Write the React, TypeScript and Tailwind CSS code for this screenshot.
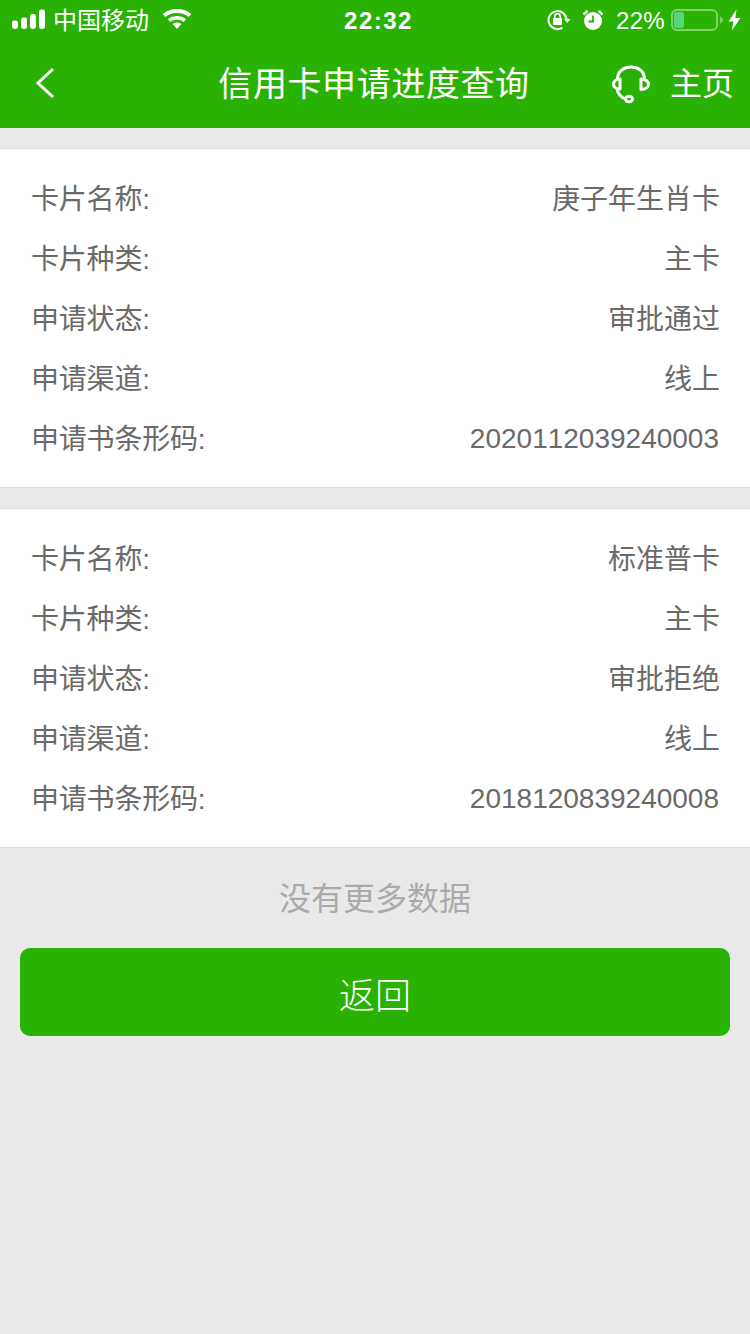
import React from "react";

const FONT = "font-['Liberation_Sans','Noto_Sans_CJK_SC',sans-serif]";

type Row = [string, string];

function Card({ rows }: { rows: Row[] }) {
  return (
    <section className="bg-white border-y border-[#dcdcdc] h-[340px] pt-[20px] pl-[31px] pr-[30px] flex flex-col">
      {rows.map(([k, v]) => (
        <div key={k} className="h-[60px] pt-[1px] flex items-center justify-between text-[28px] text-[#6a6a6a] leading-[60px]">
          <span className="tracking-[-0.2px]">{k}</span>
          <span className={/^\d+$/.test(v) ? "[font-kerning:none] mr-[1px] -mt-[2px]" : ""}>{v}</span>
        </div>
      ))}
    </section>
  );
}

function Signal() {
  return (
    <svg width="34" height="22" viewBox="0 0 34 22" className="shrink-0">
      <g fill="#fff">
        <rect x="0" y="11.500" width="6" height="8.500" rx="2.400" />
        <rect x="9" y="8.500" width="6" height="11.500" rx="2.400" />
        <rect x="18" y="5" width="6" height="15" rx="2.400" />
        <rect x="27" y="0.500" width="6" height="19.500" rx="2.400" />
      </g>
    </svg>
  );
}

function Wifi() {
  return (
    <svg width="30" height="22" viewBox="0 0 30 22" className="shrink-0">
      <g fill="none" stroke="#fff" strokeWidth="3.800">
        <path d="M2 6.500 C9 0.500 21 0.500 28 6.500" />
        <path d="M7 11.500 C11.500 8 18.500 8 23 11.500" />
      </g>
      <path d="M10.500 15 C13 13 17 13 19.500 15 L15 20 Z" fill="#fff" />
    </svg>
  );
}

function RotationLock() {
  return (
    <svg width="24" height="22" viewBox="0 0 24 22" className="shrink-0">
      <path d="M19.500 10.500 A9 9 0 1 0 15.500 18.600" fill="none" stroke="#fff" strokeWidth="2" />
      <path d="M17 10 L23.500 10 L20.200 14 Z" fill="#fff" />
      <rect x="6" y="9" width="9" height="7" rx="1" fill="#fff" />
      <path d="M7.800 9 V7.500 A2.700 2.700 0 0 1 13.200 7.500 V9" fill="none" stroke="#fff" strokeWidth="1.500" />
    </svg>
  );
}

function Alarm() {
  return (
    <svg width="22" height="22" viewBox="0 0 22 22" className="shrink-0">
      <circle cx="11" cy="12" r="9" fill="#fff" />
      <path d="M11 6.500 V12.500 H6.500" fill="none" stroke="#29b204" strokeWidth="1.800" />
      <path d="M1.500 5.500 L5.500 1.800 M20.500 5.500 L16.500 1.800" stroke="#fff" strokeWidth="2.400" fill="none" />
    </svg>
  );
}

function Battery() {
  return (
    <div className="flex items-center shrink-0">
      <div className="w-[47px] h-[22px] rounded-[6px] border-2 border-[#7fd16a] p-[1px] flex">
        <div className="w-[10px] bg-[#5ad67a] rounded-[2px]" />
      </div>
      <svg width="3" height="8" viewBox="0 0 3 8" className="ml-[2px] shrink-0">
        <path d="M0 0 L3 3 V5 L0 8 Z" fill="#7fd16a" />
      </svg>
    </div>
  );
}

function Bolt() {
  return (
    <svg width="13" height="22" viewBox="0 0 13 22" className="shrink-0">
      <path d="M8.500 0.500 L0.500 12.500 H5.500 L3.800 21.500 L12.500 9 H7.300 Z" fill="#fff" />
    </svg>
  );
}

function Headset() {
  return (
    <svg width="40" height="40" viewBox="0 0 40 40" className="shrink-0">
      <g fill="none" stroke="#fff" strokeWidth="3" strokeLinecap="round" strokeLinejoin="round">
        <path d="M6.500 15 C6.500 -1 33.500 -1 33.500 15" />
        <path d="M9 15 C4.500 15 2.500 18 2.500 20 C2.500 23 5 25 9 25 Z" />
        <path d="M30 15 C35 15 37.500 18 37.500 20 C37.500 23 35 25.500 30 25.500 Z" />
        <path d="M6 25 C7 30 10 33 14 35" />
        <ellipse cx="18" cy="35" rx="3.500" ry="2.800" />
      </g>
    </svg>
  );
}

function Back() {
  return (
    <svg width="20" height="32" viewBox="0 0 20 32" className="shrink-0">
      <path d="M17 2 L2 16 L17 30" fill="none" stroke="#fff" strokeWidth="3" />
    </svg>
  );
}

export default function App() {
  return (
    <div className={`${FONT} w-[750px] h-[1334px] bg-[#e9e9e9] flex flex-col`}>
      <header className="bg-[#29b204] h-[128px] text-white flex flex-col shrink-0">
        <div className="h-[40px] pl-[12px] pr-[9px] flex items-center relative">
          <Signal />
          <span className="ml-[7px] pt-[2px] text-[24px] leading-none">中国移动</span>
          <span className="ml-[13px]"><Wifi /></span>
          <span className="absolute left-[7px] right-0 pt-[1px] text-center text-[24px] font-bold tracking-[1.5px] pointer-events-none">22:32</span>
          <div className="ml-auto flex items-center">
            <span className="-mr-[2px]"><RotationLock /></span>
            <span className="ml-[13px]"><Alarm /></span>
            <span className="ml-[12px] pt-[1px] text-[24px] leading-none tracking-[0.3px]">22%</span>
            <span className="ml-[6px]"><Battery /></span>
            <span className="ml-[5px]"><Bolt /></span>
          </div>
        </div>
        <div className="flex-1 flex items-center pl-[36px] pr-[16px] relative">
          <span className="-mt-[3px]"><Back /></span>
          <h1 className="absolute left-0 right-[2px] text-center text-[34px] font-normal tracking-[0.6px] pointer-events-none">信用卡申请进度查询</h1>
          <div className="ml-auto flex items-center">
            <Headset />
            <span className="ml-[19px] text-[32px] leading-none">主页</span>
          </div>
        </div>
      </header>

      <div className="mt-[20px]">
        <Card rows={[["卡片名称:", "庚子年生肖卡"], ["卡片种类:", "主卡"], ["申请状态:", "审批通过"], ["申请渠道:", "线上"], ["申请书条形码:", "2020112039240003"]]} />
      </div>
      <div className="mt-[20px]">
        <Card rows={[["卡片名称:", "标准普卡"], ["卡片种类:", "主卡"], ["申请状态:", "审批拒绝"], ["申请渠道:", "线上"], ["申请书条形码:", "2018120839240008"]]} />
      </div>

      <p className="h-[100px] pt-[2px] flex items-center justify-center text-[32px] text-[#aaaaaa]">没有更多数据</p>
      <button className="mx-[20px] h-[88px] pt-[10px] rounded-[10px] bg-[#29b204] text-white text-[36px] font-light">返回</button>
    </div>
  );
}
